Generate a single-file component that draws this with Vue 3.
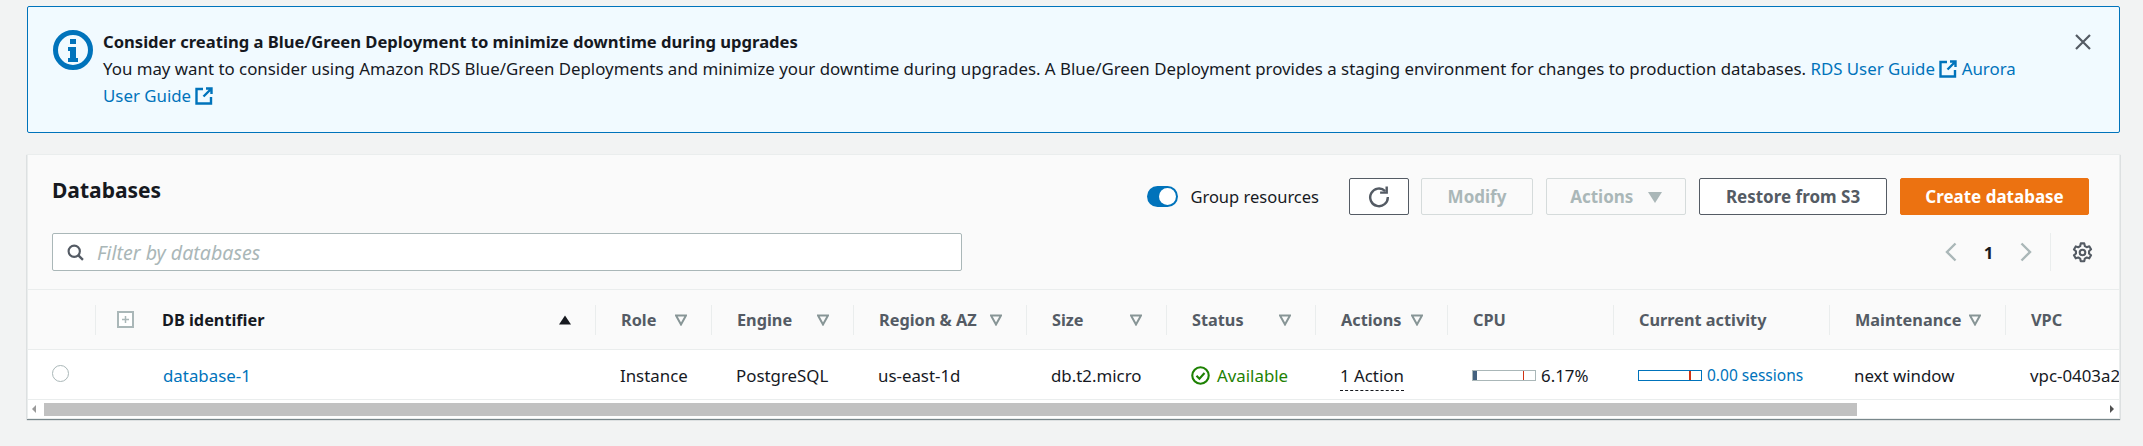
<script setup>
const columns = [
  { name: 'Role', filter: true },
  { name: 'Engine', filter: true },
  { name: 'Region & AZ', filter: true },
  { name: 'Size', filter: true },
  { name: 'Status', filter: true },
  { name: 'Actions', filter: true },
  { name: 'CPU', filter: false },
  { name: 'Current activity', filter: false },
  { name: 'Maintenance', filter: true },
  { name: 'VPC', filter: false }
]
</script>

<template>
  <div class="page">
    <section class="alert">
      <svg class="alert-icon" viewBox="0 0 40 40">
        <circle cx="20" cy="20" r="17.5" fill="none" stroke="#0073bb" stroke-width="5" />
        <rect x="17" y="9" width="6" height="5" fill="#0073bb" />
        <path d="M15 17h8v11h2v4H15v-4h2v-7h-2z" fill="#0073bb" />
      </svg>
      <div class="alert-body">
        <div class="alert-title">Consider creating a Blue/Green Deployment to minimize downtime during upgrades</div>
        <div>
          You may want to consider using Amazon RDS Blue/Green Deployments and minimize your downtime during upgrades. A Blue/Green Deployment provides a staging environment for changes to production databases.
          <a class="link">RDS User Guide <svg class="ext" viewBox="0 0 18 18"><path d="M8 2H1.5v14.5H16V10M11 1.5h5.5V7M16 2L8.5 9.5" fill="none" stroke="#0073bb" stroke-width="2.4" /></svg></a>{{ ' ' }}
          <a class="link">Aurora User Guide <svg class="ext" viewBox="0 0 18 18"><path d="M8 2H1.5v14.5H16V10M11 1.5h5.5V7M16 2L8.5 9.5" fill="none" stroke="#0073bb" stroke-width="2.4" /></svg></a>
        </div>
      </div>
      <svg class="close" viewBox="0 0 16 16"><path d="M1 1l14 14M15 1L1 15" fill="none" stroke="#545b64" stroke-width="2.2" /></svg>
    </section>

    <section class="panel">
      <header class="panel-head">
        <div class="head-row">
          <h2>Databases</h2>
          <div class="tools">
            <span class="toggle"><span class="knob"></span></span>
            <span class="toggle-label">Group resources</span>
            <button class="btn refresh">
              <svg viewBox="0 0 20 20" width="22" height="22"><path d="M15.6 4.6A8 8 0 1 0 18 10" fill="none" stroke="#545b64" stroke-width="2.2" /><path d="M17 0.5V6h-6" fill="none" stroke="#545b64" stroke-width="2.2" /></svg>
            </button>
            <button class="btn off modify">Modify</button>
            <button class="btn off actions">Actions <span class="caret"></span></button>
            <button class="btn restore">Restore from S3</button>
            <button class="btn primary">Create database</button>
          </div>
        </div>
        <div class="head-row second">
          <div class="filter">
            <svg viewBox="0 0 16 16" width="17" height="17"><circle cx="6.8" cy="6.8" r="5.3" fill="none" stroke="#545b64" stroke-width="2" /><path d="M10.5 10.5l4.5 4.5" stroke="#545b64" stroke-width="2.2" /></svg>
            <span>Filter by databases</span>
          </div>
          <div class="pager">
            <svg viewBox="0 0 12 20" width="12" height="20"><path d="M10.5 1.5L2 10l8.5 8.5" fill="none" stroke="#aab7b8" stroke-width="2.4" /></svg>
            <span class="page-no">1</span>
            <svg viewBox="0 0 12 20" width="12" height="20"><path d="M1.5 1.5L10 10l-8.5 8.5" fill="none" stroke="#aab7b8" stroke-width="2.4" /></svg>
            <span class="pager-line"></span>
            <svg class="gear" viewBox="0 0 18 18" width="21" height="21">
              <path d="M7.5 1.2h3l.5 2.3 1.6.9 2.2-.7 1.5 2.6-1.7 1.6v1.9l1.7 1.6-1.5 2.6-2.2-.7-1.6.9-.5 2.3h-3l-.5-2.3-1.6-.9-2.2.7-1.5-2.6 1.7-1.6V8l-1.7-1.6 1.5-2.6 2.2.7 1.6-.9z" fill="none" stroke="#545b64" stroke-width="1.8" stroke-linejoin="round" />
              <circle cx="9" cy="9" r="2.4" fill="none" stroke="#545b64" stroke-width="1.8" />
            </svg>
          </div>
        </div>
      </header>

      <div class="table">
        <div class="grid grid-head">
          <div></div>
          <div class="th db">
            <span class="expand"><svg viewBox="0 0 17 17" width="17" height="17"><rect x="1" y="1" width="15" height="15" fill="#fff" stroke="#aab7b8" stroke-width="2" /><path d="M8.5 5v7M5 8.5h7" stroke="#aab7b8" stroke-width="1.5" /></svg></span>
            <span class="th-name dark">DB identifier</span>
            <svg class="th-icon" viewBox="0 0 12 12"><path d="M6 1.5l6 9H0z" fill="#16191f" /></svg>
          </div>
          <div v-for="col in columns" :key="col.name" class="th">
            <span class="th-name">{{ col.name }}</span>
            <svg v-if="col.filter" class="th-icon" viewBox="0 0 12 12"><path d="M1 1.5h10L6 10.5z" fill="none" stroke="#879596" stroke-width="2" /></svg>
          </div>
        </div>

        <div class="grid grid-row">
          <div class="td radio-cell"><span class="radio"></span></div>
          <div class="td id-cell"><a class="link">database-1</a></div>
          <div class="td">Instance</div>
          <div class="td">PostgreSQL</div>
          <div class="td">us-east-1d</div>
          <div class="td">db.t2.micro</div>
          <div class="td status">
            <svg viewBox="0 0 18 18" width="19" height="19"><circle cx="9" cy="9" r="7.8" fill="none" stroke="#1d8102" stroke-width="2" /><path d="M5.2 9.2l2.8 2.8 4.8-5.4" fill="none" stroke="#1d8102" stroke-width="2" /></svg>
            <span>Available</span>
          </div>
          <div class="td"><span class="dotted">1 Action</span></div>
          <div class="td meter-cell">
            <span class="meter"><span class="fill"></span><span class="mark"></span></span>
            <span>6.17%</span>
          </div>
          <div class="td meter-cell">
            <span class="meter blue"><span class="mark thick"></span></span>
            <a class="link small">0.00 sessions</a>
          </div>
          <div class="td">next window</div>
          <div class="td vpc">vpc-0403a2</div>
        </div>

        <div class="scrollbar">
          <span class="arrow left"></span>
          <span class="thumb"></span>
          <span class="arrow right"></span>
        </div>
      </div>
    </section>
  </div>
</template>

<style>
body {
  background: #f2f3f3;
}
</style>

<style scoped>
.page {
  box-sizing: border-box;
  width: 2143px;
  height: 446px;
  padding: 6px 23px 0 27px;
  overflow: hidden;
  font-family: "Noto Sans", sans-serif;
  font-size: 16.85px;
  color: #16191f;
}

.alert {
  display: flex;
  box-sizing: border-box;
  height: 127px;
  padding: 21px 28px 0 25px;
  background: #f1faff;
  border: 1px solid #0073bb;
  border-radius: 2px;
  line-height: 27px;
}

.alert-icon {
  flex: none;
  width: 40px;
  height: 40px;
  margin: 2px 10px 0 0;
}

.alert-body {
  flex: 1;
  padding-right: 30px;
}

.alert-title {
  font-size: 16.6px;
  font-weight: 700;
}

.close {
  flex: none;
  width: 16px;
  height: 16px;
  margin-top: 6px;
}

.link {
  color: #0073bb;
}

.ext {
  width: 18px;
  height: 18px;
  vertical-align: -3px;
}

.panel {
  margin-top: 21px;
  background: #fff;
  border: 1px solid #eaeded;
  box-shadow: 0 1px 1px rgba(0, 28, 36, 0.5);
}

.panel-head {
  box-sizing: border-box;
  height: 135px;
  padding: 23px 30px 0 24px;
  background: #fafafa;
  border-bottom: 1px solid #eaeded;
}

.head-row {
  display: flex;
  align-items: center;
  justify-content: space-between;
  height: 37px;
}

.second {
  height: 38px;
  margin-top: 18px;
}

h2 {
  margin: 0 0 13px 0;
  font-size: 21px;
  font-weight: 700;
}

.tools {
  display: flex;
  align-items: center;
}

.toggle {
  display: flex;
  justify-content: flex-end;
  align-items: center;
  box-sizing: border-box;
  width: 31px;
  height: 21px;
  padding-right: 2px;
  background: #0073bb;
  border-radius: 11px;
}

.knob {
  width: 17px;
  height: 17px;
  background: #fff;
  border-radius: 50%;
}

.toggle-label {
  margin: 0 30px 0 12px;
  font-size: 16.5px;
}

.btn {
  box-sizing: border-box;
  height: 37px;
  margin-left: 13px;
  padding: 0;
  background: #fff;
  border: 1px solid #545b64;
  border-radius: 2px;
  font: 700 17px "Noto Sans", sans-serif;
  color: #545b64;
}

.refresh {
  display: flex;
  align-items: center;
  justify-content: center;
  width: 60px;
  margin-left: 0;
}

.modify {
  width: 112px;
  margin-left: 12px;
}

.actions {
  width: 140px;
}

.restore {
  width: 188px;
}

.off {
  background: transparent;
  border-color: #d5dbdb;
  color: #aab7b8;
}

.caret {
  display: inline-block;
  width: 0;
  height: 0;
  margin-left: 10px;
  border-top: 11px solid #aab7b8;
  border-left: 7px solid transparent;
  border-right: 7px solid transparent;
}

.primary {
  width: 189px;
  background: #ec7211;
  border-color: #ec7211;
  color: #fff;
}

.filter {
  display: flex;
  align-items: center;
  gap: 13px;
  box-sizing: border-box;
  width: 910px;
  height: 38px;
  padding-left: 14px;
  background: #fff;
  border: 1px solid #aab7b8;
  border-radius: 2px;
  font-size: 19.6px;
  font-style: italic;
  color: #aab7b8;
}

.pager {
  display: flex;
  align-items: center;
  height: 38px;
}

.page-no {
  width: 63px;
  text-align: center;
  font-weight: 700;
  color: #16191f;
}

.pager-line {
  width: 1px;
  height: 38px;
  margin: 0 21px 0 18px;
  background: #eaeded;
}

.gear {
  margin-right: -4px;
}

.grid {
  display: grid;
  grid-template-columns: 67px 500px 116px 142px 173px 140px 149px 132px 166px 216px 176px 200px;
}

.table {
  overflow: hidden;
}

.grid-head {
  align-items: center;
  height: 60px;
  background: #fafafa;
  border-bottom: 1px solid #eaeded;
  box-sizing: border-box;
}

.th {
  display: flex;
  align-items: center;
  justify-content: space-between;
  box-sizing: border-box;
  height: 30px;
  padding: 0 24px 0 25px;
  border-left: 1px solid #eaeded;
}

.db {
  padding-left: 21px;
}

.expand {
  display: flex;
  margin-right: 28px;
}

.th-name {
  margin-right: auto;
  font-size: 16.3px;
  font-weight: 700;
  color: #545b64;
  white-space: nowrap;
}

.dark {
  color: #16191f;
}

.th-icon {
  flex: none;
  width: 12px;
  height: 12px;
}

.grid-row {
  align-items: center;
  height: 50px;
  border-bottom: 1px solid #eaeded;
  box-sizing: border-box;
}

.td {
  padding: 1px 0 0 25px;
  white-space: nowrap;
}

.radio-cell {
  padding: 0 0 2px 24px;
  display: flex;
}

.radio {
  box-sizing: border-box;
  width: 17px;
  height: 17px;
  background: #fff;
  border: 1px solid #aab7b8;
  border-radius: 50%;
}

.id-cell {
  padding-left: 68px;
}

.status {
  display: flex;
  align-items: center;
  gap: 7px;
  color: #1d8102;
}

.dotted {
  padding-bottom: 3px;
  border-bottom: 1px dashed #16191f;
}

.meter-cell {
  display: flex;
  align-items: center;
  gap: 5px;
}

.meter {
  position: relative;
  display: block;
  box-sizing: border-box;
  width: 64px;
  height: 11px;
  background: #fff;
  border: 1px solid #aab7b8;
}

.fill {
  display: block;
  width: 4px;
  height: 100%;
  background: #44617f;
}

.mark {
  position: absolute;
  top: 0;
  bottom: 0;
  left: 50px;
  width: 1px;
  background: #d13212;
}

.blue {
  border-color: #0073bb;
}

.thick {
  width: 2px;
}

.small {
  font-size: 15.5px;
}

.scrollbar {
  display: flex;
  align-items: center;
  height: 18px;
  background: #fff;
}

.arrow {
  width: 0;
  height: 0;
  border-top: 4px solid transparent;
  border-bottom: 4px solid transparent;
}

.left {
  margin: 0 8px 0 4px;
  border-right: 4px solid #9a9a9a;
}

.thumb {
  width: 1813px;
  height: 13px;
  background: #c1c1c1;
}

.right {
  margin-left: auto;
  margin-right: 5px;
  border-left: 4px solid #505050;
}
</style>
